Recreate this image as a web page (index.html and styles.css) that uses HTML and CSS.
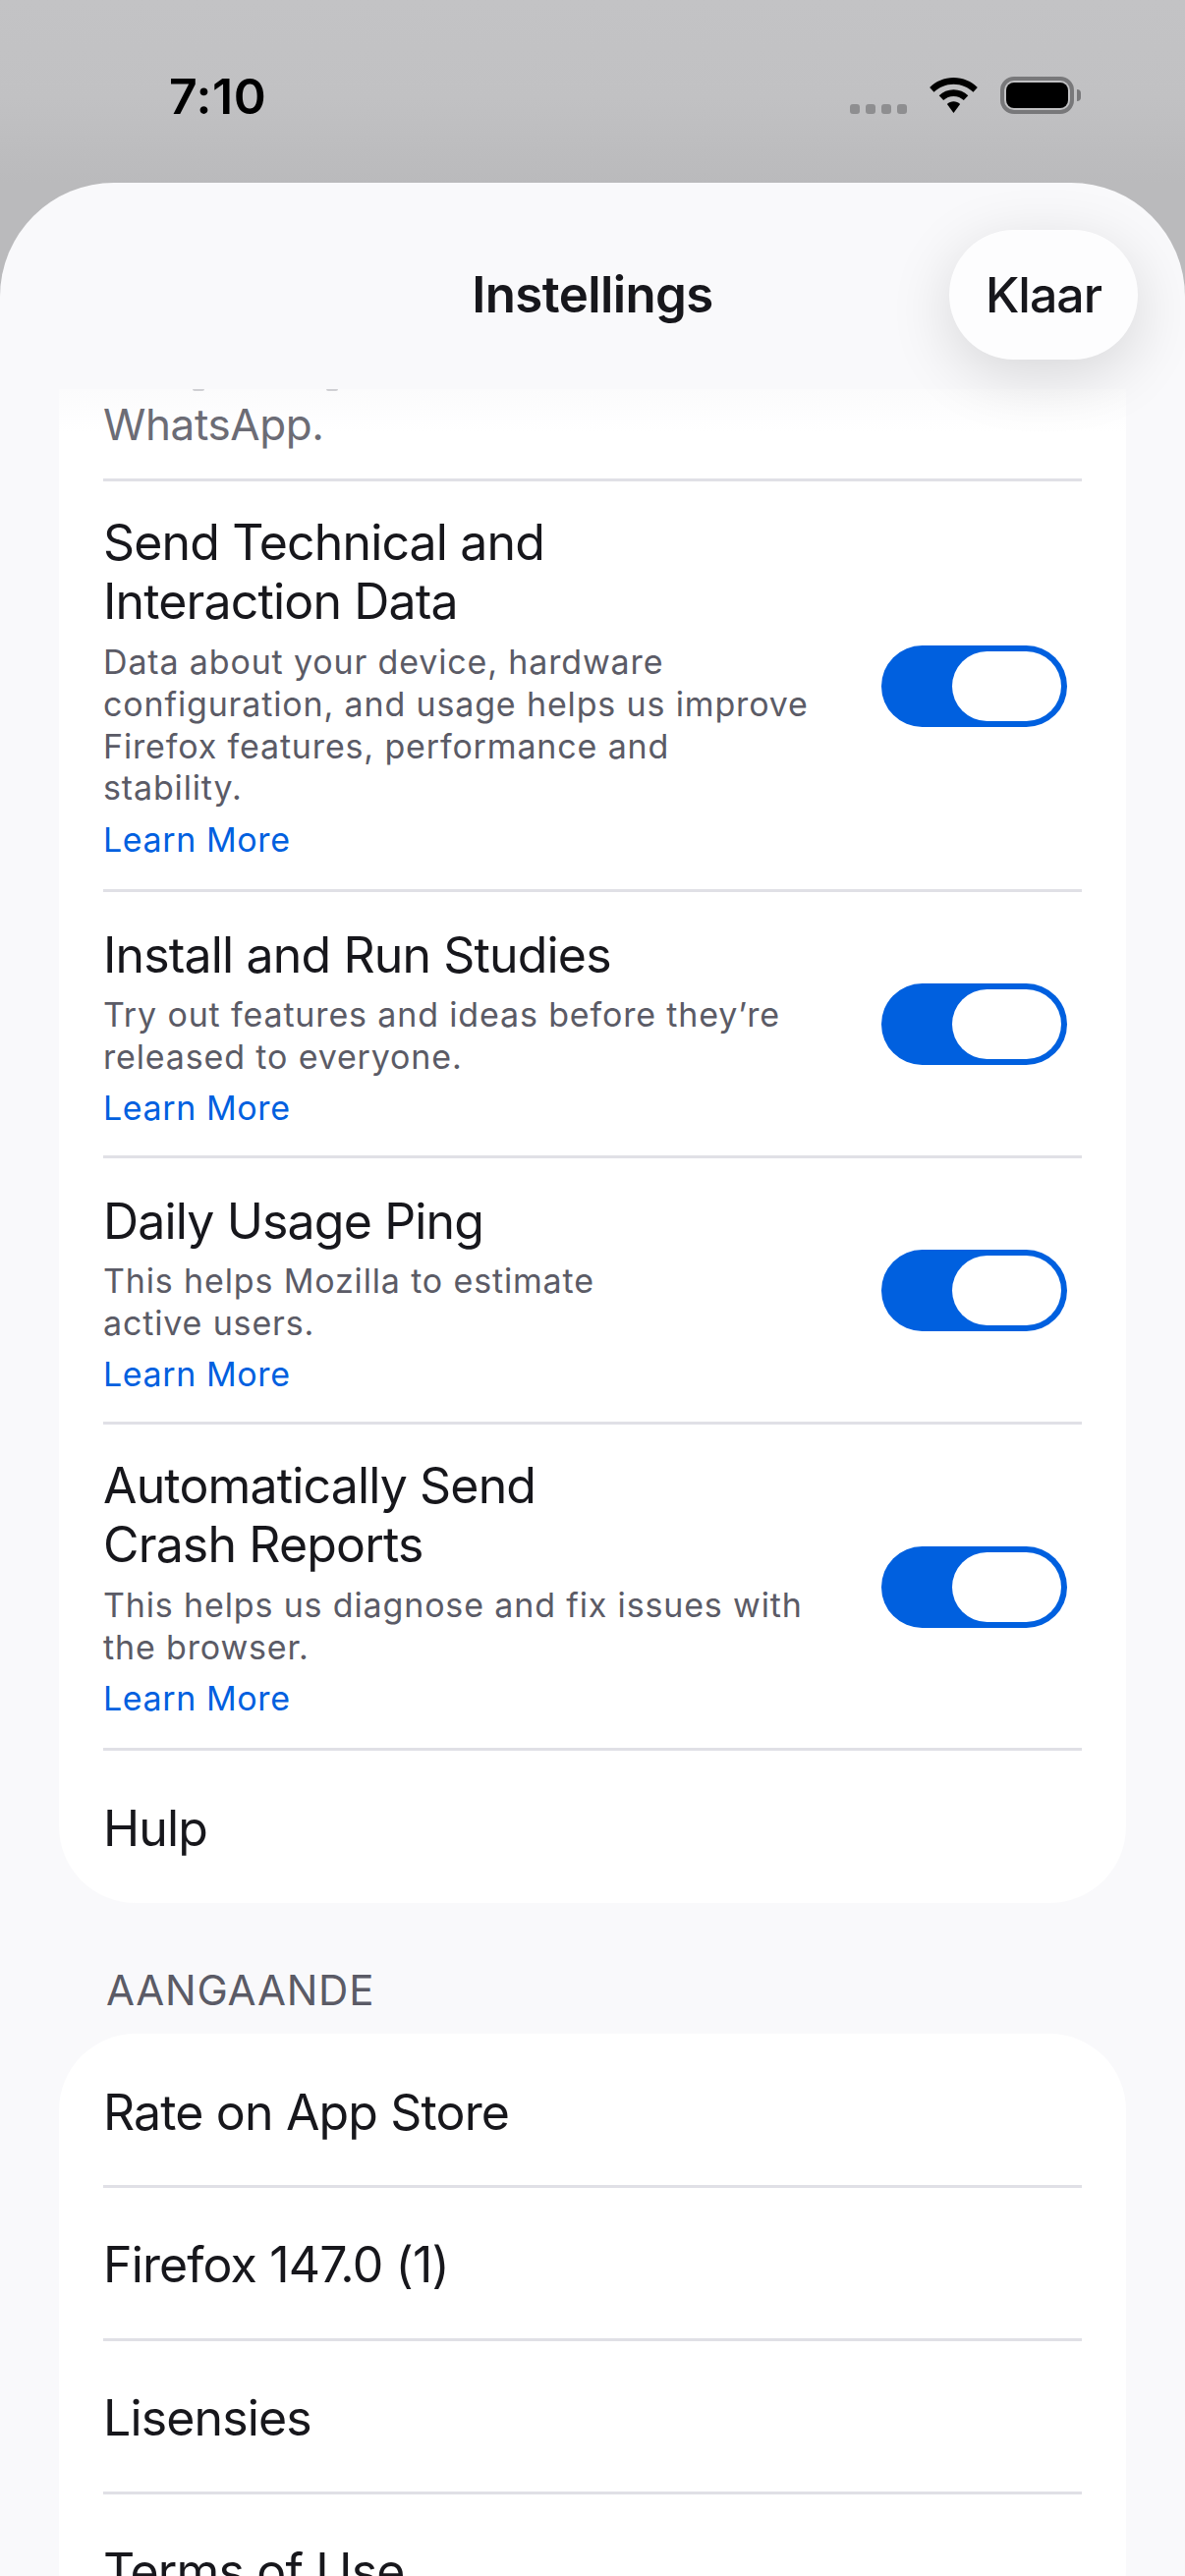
FILE: index.html
```html
<!DOCTYPE html>
<html lang="af">
<head>
<meta charset="utf-8">
<title>Instellings</title>
<link rel="stylesheet" href="styles.css">
</head>
<body>
<div class="screen">
  <div class="status">
    <span class="time">7:10</span>
    <div class="status-icons">
      <div class="signal"><i></i><i></i><i></i><i></i></div>
      <svg class="wifi" width="51" height="37" viewBox="0 0 51 38"><path d="M25.5 0C15.6 0 7 3.900 0.500 10.200L5 15.200C10.300 10 17.500 6.900 25.500 6.900S40.700 10 46 15.200L50.500 10.200C44 3.900 35.400 0 25.500 0Z"/><path d="M25.500 12.500C19.700 12.500 14.300 14.800 10.300 18.700L14.900 23.600C17.700 21 21.400 19.400 25.500 19.400S33.300 21 36.100 23.600L40.700 18.700C36.700 14.800 31.300 12.500 25.500 12.500Z"/><path d="M25.500 25C23 25 20.500 26 18.700 27.700L25.500 37L32.300 27.700C30.500 26 28 25 25.500 25Z"/></svg>
      <div class="battery"><div class="battery-fill"></div></div>
      <div class="battery-cap"></div>
    </div>
  </div>
  <div class="sheet">
    <header class="nav">
      <h1 class="nav-title">Instellings</h1>
      <button class="done">Klaar</button>
    </header>
    <main class="scroller">
      <section class="card card-first">
        <div class="row row-tail">
          <div class="clip-marks" aria-hidden="true"><i></i><i></i></div>
          <p class="desc-large">WhatsApp.</p>
        </div>
        <div class="row row-toggle">
          <div class="row-text row-text-double">
            <div class="title">Send Technical and<br>Interaction Data</div>
            <p class="desc">Data about your device, hardware<br>configuration, and usage helps us improve<br>Firefox features, performance and<br>stability.</p>
            <a class="link">Learn More</a>
          </div>
          <div class="toggle"><div class="knob"></div></div>
        </div>
        <div class="row row-toggle">
          <div class="row-text">
            <div class="title">Install and Run Studies</div>
            <p class="desc">Try out features and ideas before they’re<br>released to everyone.</p>
            <a class="link">Learn More</a>
          </div>
          <div class="toggle"><div class="knob"></div></div>
        </div>
        <div class="row row-toggle">
          <div class="row-text">
            <div class="title">Daily Usage Ping</div>
            <p class="desc">This helps Mozilla to estimate<br>active users.</p>
            <a class="link">Learn More</a>
          </div>
          <div class="toggle"><div class="knob"></div></div>
        </div>
        <div class="row row-toggle">
          <div class="row-text row-text-double">
            <div class="title">Automatically Send<br>Crash Reports</div>
            <p class="desc">This helps us diagnose and fix issues with<br>the browser.</p>
            <a class="link">Learn More</a>
          </div>
          <div class="toggle"><div class="knob"></div></div>
        </div>
        <div class="row row-plain row-last"><div class="title">Hulp</div></div>
      </section>
      <h2 class="section-head">AANGAANDE</h2>
      <section class="card">
        <div class="row row-plain"><div class="title">Rate on App Store</div></div>
        <div class="row row-plain"><div class="title">Firefox 147.0 (1)</div></div>
        <div class="row row-plain"><div class="title">Lisensies</div></div>
        <div class="row row-plain"><div class="title">Terms of Use</div></div>
      </section>
    </main>
  </div>
</div>
</body>
</html>
```
FILE: styles.css
```css
* { box-sizing: border-box; margin: 0; padding: 0; }
html, body { width: 1206px; height: 2622px; overflow: hidden; }
body { font-family: Inter, "Noto Sans", sans-serif; color: #17171c; background: #bdbdbf; }
.screen { width: 1206px; height: 2622px; display: flex; flex-direction: column; background: linear-gradient(#c3c3c5, #c1c1c3 100px, #bababc 186px); }
.status { height: 186px; flex: none; display: flex; justify-content: space-between; align-items: flex-start; padding: 68px 106px 0 172px; }
.time { font-size: 50px; font-weight: 600; line-height: 60px; color: #000; letter-spacing: 0.5px; }
.status-icons { display: flex; align-items: flex-start; margin-top: 10px; }
.signal { display: flex; gap: 6px; margin: 28px 22px 0 0; }
.signal i { width: 10px; height: 10px; border-radius: 3px; background: #8e8e90; }
.wifi { fill: #000; margin: 1px 22px 0 0; flex: none; }
.battery { width: 75px; height: 38px; border: 4px solid #78787a; border-radius: 14px; padding: 2px; flex: none; }
.battery-fill { width: 100%; height: 100%; background: #000; border-radius: 8px; }
.battery-cap { width: 4px; height: 12px; margin: 13px 0 0 3px; background: #78787a; border-radius: 0 4px 4px 0; flex: none; }
.sheet { flex: 1; min-height: 0; background: #f9f9fb; border-radius: 116px 116px 0 0; display: flex; flex-direction: column; overflow: hidden; }
.nav { height: 210px; flex: none; position: relative; z-index: 1; display: flex; align-items: center; justify-content: center; }
.nav-title { font-size: 51px; font-weight: 600; line-height: 60px; margin-top: 17px; letter-spacing: -0.6px; }
.done { position: absolute; top: 48px; right: 48px; width: 192px; height: 132px; border: 0; border-radius: 66px; background: #fdfdfe; font: 500 50px/60px Inter, sans-serif; color: #17171c; letter-spacing: -1px; box-shadow: 0 16px 64px rgba(0,0,0,0.14); }
.scroller { flex: 1; min-height: 0; overflow: hidden; }
.card { margin: 0 60px; background: #fff; border-radius: 78px; padding: 0 45px; }
.card-first { border-radius: 0 0 78px 78px; background: linear-gradient(#fbfbfc, #fff 44px); }
.row + .row { border-top: 3px solid #e0e0e6; }
.row-tail { height: 91px; }
.clip-marks { display: flex; gap: 124px; height: 2px; margin: 0 0 7px 91px; }
.clip-marks i { width: 12px; height: 2px; background: #cfcfd3; border-radius: 0 0 6px 6px; }
.desc-large { font-size: 44px; line-height: 54px; color: #6c6c75; letter-spacing: -0.4px; }
.row-toggle { display: flex; align-items: center; justify-content: space-between; padding-right: 15px; }
.row-text { padding: 34px 0 26.5px; }
.row-text-double { padding: 32px 0 28.75px; }
.row-text-double .desc { margin-top: 11px; }
.row-plain { display: flex; align-items: center; height: 156px; padding-top: 3px; }
.row-plain:first-child { height: 154px; padding-top: 6px; }
.row-last { height: 158px; }
.title { font-size: 50px; line-height: 60px; letter-spacing: -0.85px; }
.desc { font-size: 34px; line-height: 42.75px; color: #5b5b66; margin-top: 10px; letter-spacing: 0.85px; }
.link { display: block; font-size: 34px; line-height: 43px; color: #0060df; margin-top: 9px; letter-spacing: 0.6px; }
.toggle { width: 189px; height: 83px; margin-top: 2px; border-radius: 42px; background: #0060df; padding: 6px; flex: none; display: flex; justify-content: flex-end; }
.knob { width: 111px; height: 71px; border-radius: 36px; background: #fff; }
.section-head { font-size: 42px; font-weight: 400; line-height: 50px; color: #5b5b66; padding: 64px 0 19px 108px; letter-spacing: 0.75px; }
```
